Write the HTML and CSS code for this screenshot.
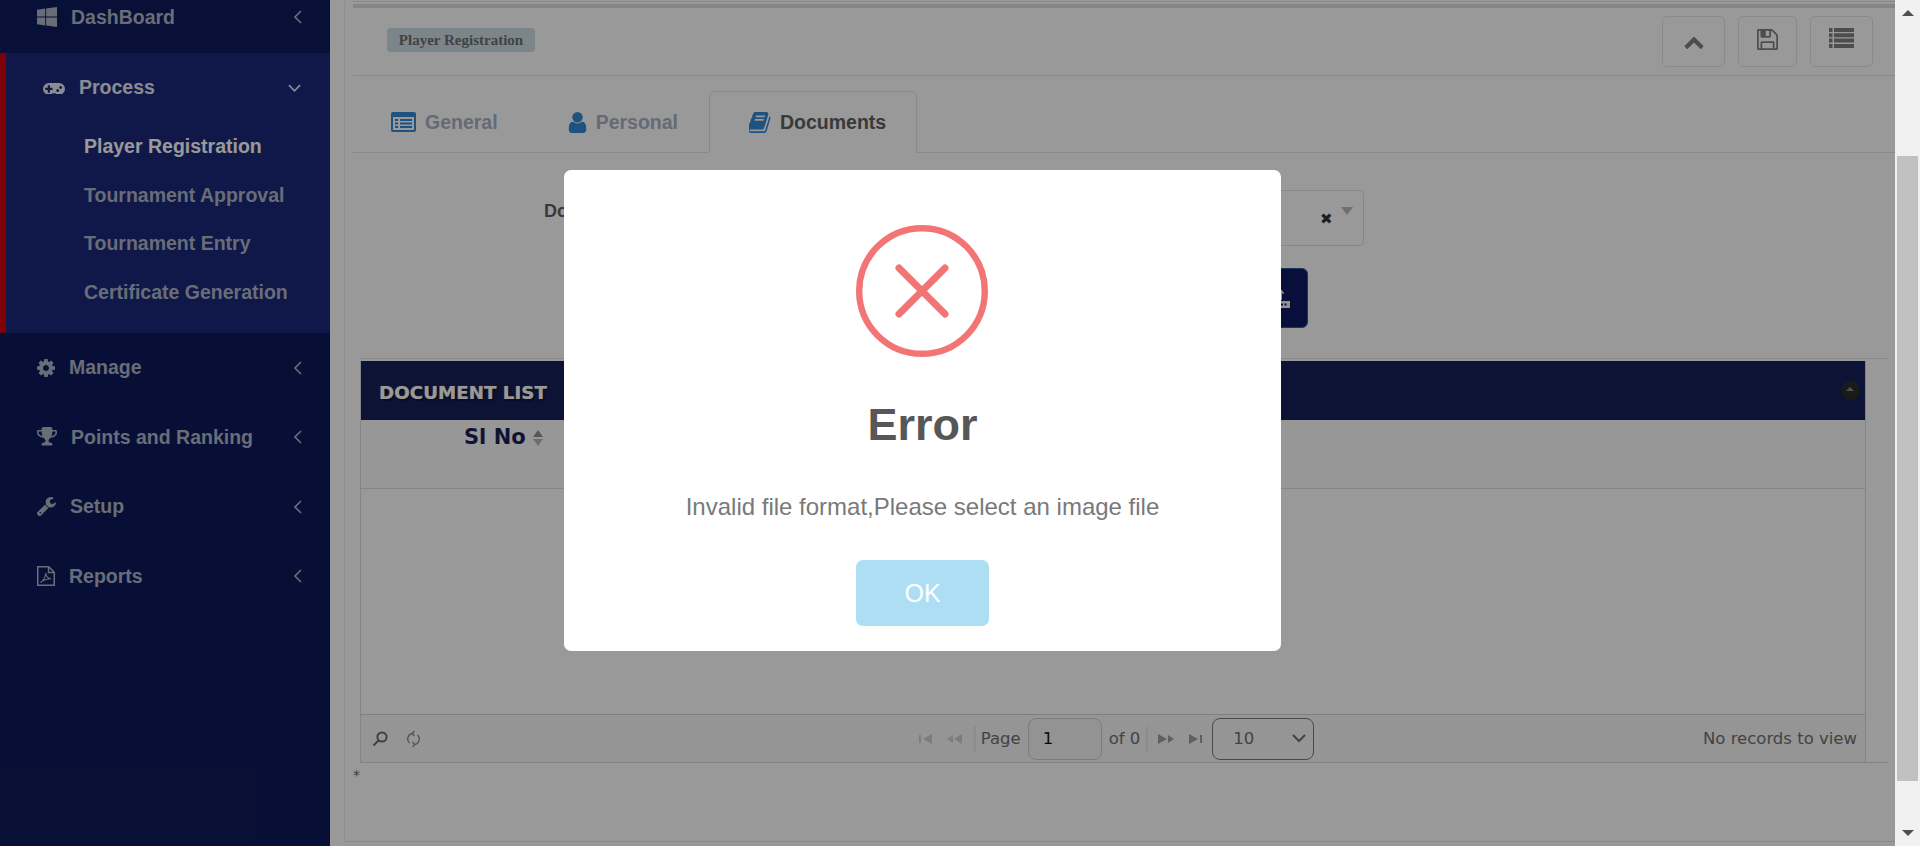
FILE: index.html
```html
<!DOCTYPE html>
<html lang="en">
<head>
<meta charset="utf-8">
<title>Player Registration</title>
<link rel="stylesheet" href="styles.css">
</head>
<body>
<div class="app">
  <aside class="sidebar">
    <div class="nav-row nav-top">
      <svg class="ico w20" viewBox="64 128 1664 1664"><path d="M746 1006v651l-682-94v-557h682zm0-743v659h-682v-565zm982 743v786l-907-125v-661h907zm0-878v794h-907v-669z"/></svg>
      <span>DashBoard</span>
      <svg class="chev" viewBox="0 0 8 14"><path d="M7 1L1 7l6 6"/></svg>
    </div>
    <div class="nav-group">
      <div class="nav-row nav-process">
        <svg class="ico w22" viewBox="0 320 1920 1024"><path d="M832 1024v-128q0-14-9-23t-23-9h-192v-192q0-14-9-23t-23-9h-128q-14 0-23 9t-9 23v192h-192q-14 0-23 9t-9 23v128q0 14 9 23t23 9h192v192q0 14 9 23t23 9h128q14 0 23-9t9-23v-192h192q14 0 23-9t9-23zm576 64q0-53-37.500-90.500t-90.500-37.500-90.500 37.500-37.500 90.500 37.500 90.500 90.500 37.500 90.500-37.500 37.500-90.500zm256-256q0-53-37.500-90.500t-90.500-37.500-90.500 37.500-37.500 90.500 37.500 90.500 90.500 37.500 90.500-37.500 37.500-90.500zm256 128q0 212-150 362t-362 150q-192 0-338-128h-220q-146 128-338 128-212 0-362-150t-150-362 150-362 362-150h896q212 0 362 150t150 362z"/></svg>
        <span class="on">Process</span>
        <svg class="chev-down" viewBox="0 0 14 8"><path d="M1 1l6 6 6-6"/></svg>
      </div>
      <div class="sub sub-on">Player Registration</div>
      <div class="sub">Tournament Approval</div>
      <div class="sub">Tournament Entry</div>
      <div class="sub">Certificate Generation</div>
    </div>
    <div class="nav-row">
      <svg class="ico w18" viewBox="128 128 1536 1536"><path d="M1152 896q0-106-75-181t-181-75-181 75-75 181 75 181 181 75 181-75 75-181zm512-109v222q0 12-8 23t-20 13l-185 28q-19 54-39 91 35 50 107 138 10 12 10 25t-9 23q-27 37-99 108t-94 71q-12 0-26-9l-138-108q-44 23-91 38-16 136-29 186-7 28-36 28h-222q-14 0-24.500-8.500t-11.500-21.500l-28-184q-49-16-90-37l-141 107q-10 9-25 9-14 0-25-11-126-114-165-168-7-10-7-23 0-12 8-23 15-21 51-66.500t54-70.500q-27-50-41-99l-183-27q-13-2-21-12.500t-8-23.500v-222q0-12 8-23t19-13l186-28q14-46 39-92-40-57-107-138-10-12-10-24 0-10 9-23 26-36 98.500-107.500t94.500-71.500q13 0 26 10l138 107q44-23 91-38 16-136 29-186 7-28 36-28h222q14 0 24.500 8.500t11.500 21.500l28 184q49 16 90 37l142-107q9-9 24-9 13 0 25 10 129 119 165 170 7 8 7 22 0 12-8 23-15 21-51 66.500t-54 70.500q26 50 41 98l183 28q13 2 21 12.500t8 23.500z"/></svg>
      <span>Manage</span>
      <svg class="chev" viewBox="0 0 8 14"><path d="M7 1L1 7l6 6"/></svg>
    </div>
    <div class="nav-row">
      <svg class="ico w20" viewBox="64 128 1664 1664"><path d="M522 883q-74-162-74-371h-256v96q0 78 94.500 162t235.500 113zm1078-275v-96h-256q0 209-74 371 141-29 235.500-113t94.500-162zm128-128v128q0 71-41.500 143t-112 130-173 97.500-215.500 44.500q-42 54-95 95-38 34-52.500 72.500t-14.500 89.500q0 54 30.500 91t97.500 37q75 0 133.500 45.500t58.500 114.500v64q0 14-9 23t-23 9h-832q-14 0-23-9t-9-23v-64q0-69 58.500-114.500t133.500-45.500q67 0 97.500-37t30.500-91q0-51-14.500-89.500t-52.500-72.500q-53-41-95-95-113-5-215.500-44.500t-173-97.500-112-130-41.500-143v-128q0-40 28-68t68-28h288v-96q0-66 47-113t113-47h576q66 0 113 47t47 113v96h288q40 0 68 28t28 68z"/></svg>
      <span>Points and Ranking</span>
      <svg class="chev" viewBox="0 0 8 14"><path d="M7 1L1 7l6 6"/></svg>
    </div>
    <div class="nav-row">
      <svg class="ico w19" viewBox="96 128 1632 1632"><path d="M448 1472q0-26-19-45t-45-19-45 19-19 45 19 45 45 19 45-19 19-45zm644-420l-682 682q-37 37-90 37-52 0-91-37l-106-108q-38-36-38-90 0-53 38-91l681-681q39 98 114.500 173.500t173.500 114.500zm634-435q0 39-23 106-47 134-164.500 217.500t-258.500 83.500q-185 0-316.500-131.500t-131.500-316.500 131.500-316.500 316.500-131.500q58 0 121.500 16.500t107.500 46.500q16 11 16 28t-16 28l-293 169v224l193 107q5-3 79-48.500t135.500-81 70.500-35.500q15 0 23.500 10t8.500 25z"/></svg>
      <span>Setup</span>
      <svg class="chev" viewBox="0 0 8 14"><path d="M7 1L1 7l6 6"/></svg>
    </div>
    <div class="nav-row">
      <svg class="ico-line w18" viewBox="0 0 18 20"><path d="M.75.75h11l5.500 5.500v13h-16.500zM11.500.75v5.750h5.750"/><path class="thin" d="M3.500 16.500c3-1.500 5-6 5.200-9.500.3 3 2.300 5.500 5.500 5.800-3.500 0-7.500 1-10.700 3.700z"/></svg>
      <span>Reports</span>
      <svg class="chev" viewBox="0 0 8 14"><path d="M7 1L1 7l6 6"/></svg>
    </div>
  </aside>

  <main class="main">
    <div class="frame">
      <div class="band"></div>
      <header class="page-head">
        <span class="badge">Player Registration</span>
        <div class="tools">
          <button class="tool" type="button"><svg class="t-up" viewBox="100 240 1592 1280"><path d="M1683 1331l-166 165q-19 19-45 19t-45-19l-531-531-531 531q-19 19-45 19t-45-19l-166-165q-19-19-19-45.500t19-45.500l742-741q19-19 45-19t45 19l742 741q19 19 19 45.500t-19 45.500z"/></svg></button>
          <button class="tool tool-s" type="button"><svg class="t-save" viewBox="128 128 1536 1536"><path d="M512 1536h768v-384h-768v384zm896 0h128v-896q0-14-10-38.500t-20-34.500l-281-281q-10-10-34-20t-39-10v416q0 40-28 68t-68 28h-576q-40 0-68-28t-28-68v-416h-128v1280h128v-416q0-40 28-68t68-28h832q40 0 68 28t28 68v416zm-384-928v-320q0-13-9.500-22.500t-22.500-9.500h-192q-13 0-22.500 9.500t-9.500 22.500v320q0 13 9.500 22.500t22.500 9.500h192q13 0 22.500-9.500t9.500-22.500zm640 32v928q0 40-28 68t-68 28h-1344q-40 0-68-28t-28-68v-1344q0-40 28-68t68-28h928q40 0 88 20t76 48l280 280q28 28 48 76t20 88z"/></svg></button>
          <button class="tool" type="button"><svg class="t-list" viewBox="0 0 25 20"><path d="M0 0h3.500v4H0zM5 0h20v4H5zM0 5.300h3.500v4H0zM5 5.300h20v4H5zM0 10.600h3.500v4H0zM5 10.600h20v4H5zM0 16h3.500v4H0zM5 16h20v4H5z"/></svg></button>
        </div>
      </header>

      <nav class="tabs">
        <div class="tab tab-1">
          <svg class="ti ti-list" viewBox="0 0 25 20"><path fill-rule="evenodd" d="M2 0h21a2 2 0 0 1 2 2v16a2 2 0 0 1-2 2H2a2 2 0 0 1-2-2V2a2 2 0 0 1 2-2zM2 5v13h21V5zM4 7h3v2H4zM9 7h12v2H9zM4 10.500h3v2H4zM9 10.500h12v2H9zM4 14h3v2H4zM9 14h12v2H9z"/></svg>
          General
        </div>
        <div class="tab tab-2">
          <svg class="ti ti-user" viewBox="256 128 1280 1536"><path d="M1536 1399q0 109-62.500 187t-150.500 78h-854q-88 0-150.500-78t-62.500-187q0-85 8.500-160.500t31.500-152 58.500-131 94-89 134.500-34.500q131 128 313 128t313-128q76 0 134.500 34.500t94 89 58.500 131 31.500 152 8.500 160.500zm-256-887q0 159-112.500 271.500t-271.500 112.500-271.500-112.500-112.500-271.500 112.500-271.500 271.500-112.500 271.500 112.500 112.500 271.500z"/></svg>
          Personal
        </div>
        <div class="tab tab-on">
          <svg class="ti ti-book" viewBox="96 128 1600 1536"><path d="M1639 478q40 57 18 129l-275 906q-19 64-76.500 107.500t-122.500 43.500h-923q-77 0-148.500-53.500t-99.500-131.500q-24-67-2-127 0-4 3-27t4-37q1-8-3-21.500t-3-19.500q2-11 8-21t16.500-23.500 16.500-23.500q23-38 45-91.500t30-91.500q3-10 .5-30t-.5-28q3-11 17-28t17-23q21-36 42-92t25-90q1-9-2.500-32t.5-28q4-13 22-30.500t22-22.500q19-26 42.500-84.500t27.500-96.500q1-8-3-25.500t-2-26.500q2-8 9-18t18-23 17-21q8-12 16.500-30.500t15-35 16-36 19.500-32 26.500-23.500 36-11.500 47.500 5.500l-1 3q38-9 51-9h761q74 0 114 56t18 130l-274 906q-36 119-71.500 153.500t-128.500 34.500h-869q-27 0-38 15-11 16-1 43 24 70 144 70h923q29 0 56-15.500t35-41.500l300-987q7-22 5-57 38 15 59 43zm-1064 2q-4 13 2 22.500t20 9.500h608q13 0 25.500-9.500t16.500-22.500l21-64q4-13-2-22.500t-20-9.500h-608q-13 0-25.500 9.500t-16.500 22.500zm-83 256q-4 13 2 22.500t20 9.500h608q13 0 25.500-9.500t16.500-22.500l21-64q4-13-2-22.500t-20-9.500h-608q-13 0-25.500 9.500t-16.500 22.500z"/></svg>
          Documents
        </div>
      </nav>

      <section class="form">
        <div class="field">
          <label class="field-label">Document Type</label>
          <div class="field-select">
            <span class="clear">✖</span>
            <span class="caret"></span>
          </div>
        </div>
        <div class="actions">
          <button class="upload" type="button">
            <svg class="upload-ico" viewBox="0 0 20 20"><path d="M10 0l4.500 5.500H12V12H8V5.500H5.500z"/><path fill-rule="evenodd" d="M0 13h20v7H0zM11 15.500v2h2v-2zM14.500 15.500v2h2v-2z"/></svg>
          </button>
        </div>
      </section>

      <section class="panel">
        <div class="grid">
          <div class="caption">
            <span class="caption-title">DOCUMENT LIST</span>
            <span class="collapse"></span>
          </div>
          <div class="col-row">
            <span class="col-head">Sl No</span>
            <span class="sort"><i class="sort-up"></i><i class="sort-down"></i></span>
          </div>
          <div class="grid-body"></div>
          <div class="pager-bar">
            <div class="pager-left">
              <svg class="p-search" viewBox="0 0 16 16"><circle cx="10" cy="6" r="4.600"/><path d="M6.500 9.500L1.500 14.500"/></svg>
              <svg class="p-reload" viewBox="0 0 15 18"><path d="M7.500 3.500a5.500 5.500 0 0 0-4 9.500M7.500 14.500a5.500 5.500 0 0 0 4-9.500M8.500 1L6 3.500 8.500 6M6.500 12l2.500 2.500L6.500 17"/></svg>
            </div>
            <div class="pager-center">
              <svg class="p-first" viewBox="0 0 13 10"><path d="M0 1h2v8H0zM13 0v10L4 5z"/></svg>
              <svg class="p-prev" viewBox="0 0 16 10"><path d="M7 1v8L1 5zM16 0v10L8 5z"/></svg>
              <span class="p-sep"></span>
              <span class="p-text">Page</span>
              <input class="p-input" value="1" aria-label="Page">
              <span class="p-text">of 0</span>
              <span class="p-sep p-sep-2"></span>
              <svg class="p-next" viewBox="0 0 17 10"><path d="M0 0v10l9-5zM10 1v8l6-4z"/></svg>
              <svg class="p-last" viewBox="0 0 14 10"><path d="M0 0v10l9-5zM11 1h2v8h-2z"/></svg>
              <div class="p-select"><span>10</span><svg class="p-chev" viewBox="0 0 14 9"><path d="M1 1l6 6 6-6"/></svg></div>
            </div>
            <div class="pager-right">No records to view</div>
          </div>
        </div>
      </section>
      <div class="star">*</div>
    </div>
  </main>

  <div class="scrollbar">
    <span class="arrow arrow-up"></span>
    <span class="thumb"></span>
    <span class="arrow arrow-down"></span>
  </div>

  <div class="overlay">
    <div class="modal" role="dialog">
      <svg class="err-ico" viewBox="0 0 132 132"><circle cx="66" cy="66" r="62.800"/><path class="err-x" d="M43 43l46 46M89 43L43 89"/></svg>
      <h2 class="err-title">Error</h2>
      <p class="err-text">Invalid file format,Please select an image file</p>
      <button class="err-ok" type="button">OK</button>
    </div>
  </div>
</div>
</body>
</html>
```
FILE: styles.css
```css
* { box-sizing: border-box; }
html, body { margin: 0; height: 100%; overflow: hidden; background: #fff; }
body { font-family: "Liberation Sans", Arial, sans-serif; }

.app { position: relative; display: flex; width: 1920px; height: 846px; overflow: hidden; }

/* sidebar */
.sidebar { width: 330px; flex: none; background: #0e1a5a; color: #adb6c8; font-weight: 700; font-size: 19.500px; }
.nav-row { display: flex; align-items: center; height: 69.500px; padding: 0 28px 0 37px; }
.nav-row > span { margin-left: 14px; }
.nav-top { height: 53px; padding-bottom: 19px; background: #0f1b5e; }
.nav-group { height: 280px; background: #1b287b; border-left: 6px solid #d50010; }
.nav-process { height: 69px; padding-right: 29px; }
.on { color: #fff; opacity: .9; }
.sub { height: 48.700px; padding-left: 78px; line-height: 48.700px; }
.sub-on { color: #fff; }
.ico, .ico-line { flex: none; fill: #adb6c8; }
.w18 { width: 18px; height: 18px; }
.w19 { width: 19px; height: 19px; }
.w20 { width: 20px; height: 20px; }
.w22 { width: 22px; height: 13px; fill: #fff; opacity: .9; }
.ico-line { height: 20px; fill: none; stroke: #adb6c8; stroke-width: 1.500; }
.ico-line .thin { stroke-width: 1.100; }
.chev, .chev-down { margin-left: auto; flex: none; fill: none; stroke: #adb6c8; stroke-width: 1.600; }
.chev { width: 8px; height: 14px; }
.chev-down { width: 13px; height: 8px; stroke: #fff; stroke-width: 1.800; opacity: .9; }

/* main */
.main { width: 1565px; flex: none; padding-left: 14px; }
.frame { height: 841px; border-left: 1px solid #eeeeee; border-bottom: 1px solid #e3e3e3; padding-left: 8px; }
.band { height: 7px; border-top: 1px solid #e4e4e4; margin-top: 1px; margin-bottom: -1px; border-bottom: 4px solid #e0e0e0; background: #fff; }

.page-head { display: flex; align-items: center; justify-content: space-between; height: 69px; padding: 0 22px 0 34px; border-bottom: 1px solid #e6e6e6; }
.badge { display: block; width: 148px; height: 24px; margin-top: -2px; background: #cfdee4; border-radius: 3px; color: #6f6f6f; text-align: center; font: 700 15px/24px "Liberation Serif", "Times New Roman", serif; }
.tools { display: flex; gap: 13px; }
.tool { display: flex; align-items: center; justify-content: center; width: 63px; height: 51px; padding: 0; background: #fff; border: 1px solid #e6e6e6; border-radius: 5px; }
.tool svg { fill: #808080; }
.tool-s { width: 59px; }
.t-up { width: 22px; height: 15px; }
.t-save { width: 21px; height: 21px; margin-top: -4px; }
.t-list { width: 25px; height: 20px; margin-top: -6px; }

.tabs { display: flex; align-items: flex-end; height: 77px; padding-left: 2px; border-bottom: 1px solid #e4e4e4; }
.tab { display: flex; align-items: center; height: 62px; margin-bottom: -1px; color: #a8b1c5; font-weight: 700; font-size: 19.500px; white-space: nowrap; }
.tab-1 { padding-left: 36px; padding-right: 34px; }
.tab-2 { padding-left: 36px; padding-right: 31px; }
.tab-on { padding-left: 39px; padding-right: 30px; color: #5f5f5f; background: #fff; border: 1px solid #e4e4e4; border-bottom-color: #fff; border-radius: 6px 6px 0 0; }
.ti { flex: none; fill: #3489d5; margin-right: 9px; }
.ti-list { width: 25px; height: 20px; }
.ti-user { width: 19px; height: 21px; }
.ti-book { width: 22px; height: 21px; }

.form { padding: 37px 0 0 191px; width: 1011px; }
.field { display: flex; height: 56px; }
.field-label { width: 356px; padding-top: 11px; color: #5f5f5f; font-size: 18px; font-weight: 700; }
.field-select { position: relative; width: 464px; border: 1px solid #dfdfdf; border-radius: 4px; background: #fff; }
.clear { position: absolute; left: 419px; top: 19px; color: #333; font: 15px/18px "DejaVu Sans", sans-serif; }
.caret { position: absolute; right: 10px; top: 16px; border: 6px solid transparent; border-top: 8px solid #bbb; border-bottom: 0; }
.actions { display: flex; justify-content: flex-end; margin-top: 22px; padding-right: 56px; width: 820px; }
.upload { display: flex; align-items: center; justify-content: flex-end; width: 108px; height: 60px; padding: 0 17px 0 0; background: #0e1a62; border: 1px solid #2b5d96; border-radius: 6px; }
.upload-ico { width: 20px; height: 20px; fill: #f2f2f2; }

.panel { margin: 30px 7px 0 7px; height: 405px; border-top: 1px solid #e4e4e4; border-bottom: 1px solid #dcdcdc; padding-top: 2px; }
.grid { display: flex; flex-direction: column; width: 1506px; height: 401px; border-left: 1px solid #dcdcdc; border-right: 1px solid #dcdcdc; }
.caption { display: flex; align-items: center; justify-content: space-between; height: 59px; flex: none; padding: 3px 5px 0 18px; background: #142059; }
.caption-title { color: #fff; font: 700 18.300px "DejaVu Sans", Verdana, sans-serif; text-shadow: 0 0 1px #bbb, 1px 1px 2px #000; }
.collapse { position: relative; width: 19px; height: 19px; margin-top: -3px; border-radius: 50%; background: #2c2c2c; }
.collapse::after { content: ""; position: absolute; left: 5px; top: 6px; border-left: 4.500px solid transparent; border-right: 4.500px solid transparent; border-bottom: 4px solid #888; }
.col-row { display: flex; flex: none; align-items: flex-start; height: 69px; padding: 7px 0 0 103px; background: #fcfcfc; border-bottom: 1px solid #dcdcdc; }
.col-head { color: #1a2256; font: 700 21px/21px "DejaVu Sans", Verdana, sans-serif; }
.sort { display: flex; flex-direction: column; gap: 2px; margin: 3px 0 0 7px; }
.sort i { display: block; border-left: 5px solid transparent; border-right: 5px solid transparent; }
.sort-up { border-bottom: 7px solid #909090; }
.sort-down { border-top: 7px solid #b8b8b8; }
.grid-body { flex: none; height: 226px; border-bottom: 1px solid #d4d4d4; }
.pager-bar { flex: 1; display: grid; grid-template-columns: 1fr auto 1fr; align-items: center; background: #f8f8f8; font: 16.500px "DejaVu Sans", Verdana, sans-serif; color: #707070; }
.pager-left { display: flex; align-items: center; gap: 18px; padding-left: 11px; }
.p-search { width: 16px; height: 16px; fill: none; stroke: #6d6d6d; stroke-width: 2; }
.p-reload { width: 15px; height: 18px; fill: none; stroke: #8a8a8a; stroke-width: 1.300; }
.pager-center { display: flex; align-items: center; padding-left: 7px; }
.pager-center svg { flex: none; }
.p-first { width: 13px; height: 10px; fill: #d0d0d0; margin-right: 14px; }
.p-prev { width: 16px; height: 10px; fill: #d0d0d0; margin-right: 12px; }
.p-sep { width: 2px; height: 26px; margin-right: 5px; border-left: 1px solid #e4e4e4; border-right: 1px solid #eeeeee; }
.p-sep-2 { margin: 0 10px 0 6px; }
.p-text { white-space: nowrap; }
.p-input { width: 74px; height: 42px; margin: 0 7px; padding: 0 0 0 14px; background: #f5f5f5; border: 1px solid #cfcfcf; border-radius: 8px; color: #111; font: 16.500px "DejaVu Sans", Verdana, sans-serif; }
.p-next { width: 17px; height: 10px; fill: #a0a0a0; margin-right: 14px; }
.p-last { width: 14px; height: 10px; fill: #a0a0a0; margin-right: 9px; }
.p-select { display: flex; align-items: center; justify-content: space-between; width: 102px; height: 42px; padding: 0 7px 0 20px; border: 1px solid #7b7b7b; border-radius: 8px; }
.p-chev { width: 14px; height: 9px; fill: none; stroke: #707070; stroke-width: 2; }
.pager-right { text-align: right; padding-right: 8px; white-space: nowrap; }
.star { padding-top: 3px; color: #666; font: 14px/18px "DejaVu Sans", Verdana, sans-serif; }

/* scrollbar */
.scrollbar { position: relative; z-index: 3; display: flex; flex-direction: column; align-items: center; width: 25px; flex: none; background: #f1f1f1; padding: 10px 0; }
.arrow { display: block; flex: none; border-left: 6px solid transparent; border-right: 6px solid transparent; }
.arrow-up { border-bottom: 6px solid #505050; }
.arrow-down { margin-top: auto; border-top: 6px solid #505050; }
.thumb { display: block; flex: none; width: 21px; height: 625px; margin-top: 140px; background: #c1c1c1; }

/* dialog */
.overlay { position: absolute; left: 0; top: 0; right: 25px; bottom: 0; background: rgba(0, 0, 0, .4); }
.modal { position: absolute; left: 564px; top: 170px; display: flex; flex-direction: column; align-items: center; width: 717px; height: 481px; padding-top: 55px; background: #fff; border-radius: 7px; }
.err-ico { width: 132px; height: 132px; margin-left: -1px; fill: none; stroke: #f27474; stroke-width: 6.400; stroke-linecap: round; }
.err-x { stroke-width: 7; }
.err-title { margin: 41px 0 0; color: #575757; font-size: 45px; line-height: 54px; font-weight: 700; }
.err-text { margin: 40px 0 0; color: #797979; font-size: 24px; line-height: 30px; }
.err-ok { width: 133px; height: 66px; margin-top: 38px; padding: 0; background: #aedef4; border: 0; border-radius: 7px; color: #fff; font-family: "Liberation Sans", Arial, sans-serif; font-size: 25px; }
```
